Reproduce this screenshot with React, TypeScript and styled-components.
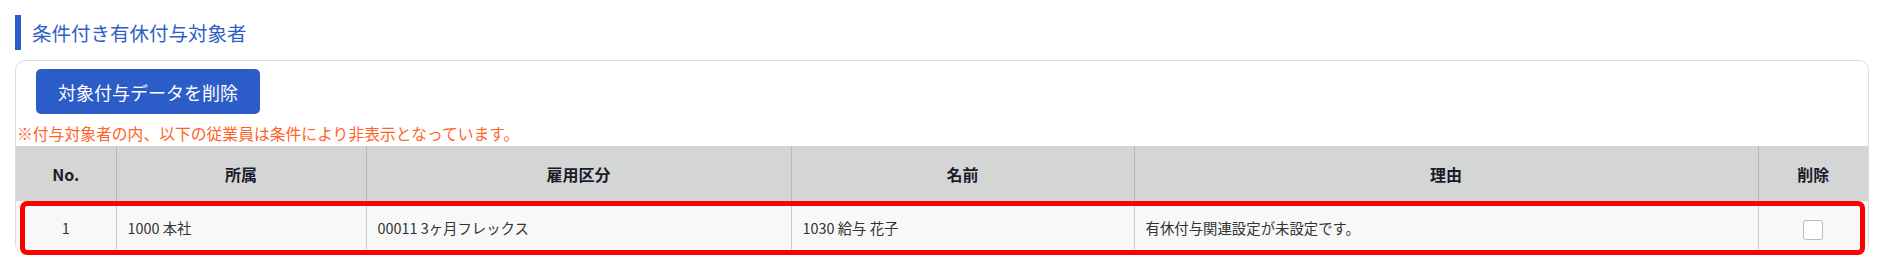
import React from 'react';
import styled, {createGlobalStyle} from "styled-components";

const GlobalStyle = createGlobalStyle`
    body {
        margin: 0;
        background: #ffffff;
        font-family: "Noto Sans CJK JP", "Noto Sans", sans-serif;
        color: #333;
    }
`

const columns = [
    {title: 'No.', width: 100},
    {title: '所属', width: 250},
    {title: '雇用区分', width: 425},
    {title: '名前', width: 343},
    {title: '理由', width: 624},
    {title: '削除', width: 110},
]

const rows = [
    {no: '1', dept: '1000 本社', type: '00011 3ヶ月フレックス', name: '1030 給与 花子', reason: '有休付与関連設定が未設定です。'},
]

export default function App() {
    return (
        <Page>
            <GlobalStyle/>
            <Heading>条件付き有休付与対象者</Heading>
            <Card>
                <DeleteButton>対象付与データを削除</DeleteButton>
                <Notice>※付与対象者の内、以下の従業員は条件により非表示となっています。</Notice>
                <Table>
                    <thead>
                    <tr>
                        {columns.map(c => <Th key={c.title} $width={c.width}>{c.title}</Th>)}
                    </tr>
                    </thead>
                    <tbody>
                    {rows.map(r => (
                        <Row key={r.no}>
                            <Td $center>{r.no}</Td>
                            <Td>{r.dept}</Td>
                            <Td>{r.type}</Td>
                            <Td>{r.name}</Td>
                            <Td>{r.reason}</Td>
                            <Td $center>
                                <CheckBox type="checkbox"/>
                            </Td>
                        </Row>
                    ))}
                    </tbody>
                </Table>
                <Highlight/>
            </Card>
        </Page>
    );
}

const Page = styled.div`
    padding: 15px 13px 20px 15px;
`

const Heading = styled.h2`
    margin: 0;
    height: 35px;
    display: flex;
    align-items: center;
    border-left: 6px solid #2a5bcf;
    padding-left: 11px;
    font-size: 19.5px;
    font-weight: normal;
    color: #2f5fc4;
    line-height: 35px;
`

const Card = styled.div`
    position: relative;
    margin-top: 10px;
    border: 1px solid #dcdcdc;
    border-radius: 10px;
    padding-top: 8px;
`

const DeleteButton = styled.button`
    display: block;
    margin-left: 20px;
    width: 224px;
    height: 45px;
    border: none;
    border-radius: 5px;
    background: #2b5cc8;
    color: #fff;
    font-family: inherit;
    font-size: 18px;
    cursor: pointer;
`

const Notice = styled.p`
    margin: 8px 0 0 1px;
    font-size: 15.8px;
    line-height: 24px;
    color: #ff6428;
`

const Table = styled.table`
    width: 100%;
    border-collapse: collapse;
    table-layout: fixed;
    font-size: 14.4px;
`

const Th = styled.th<{ $width: number }>`
    box-sizing: border-box;
    width: ${p => p.$width}px;
    height: 55px;
    padding: 0;
    background: #d4d6d5;
    color: #1b1b2b;
    font-size: 16px;
    font-weight: bold;
    text-align: center;
    border-left: 1px solid #b8b8b8;

    &:first-child {
        border-left: none;
    }
`

const Row = styled.tr`
    background: #f8f8f8;
`

const Td = styled.td<{ $center?: boolean }>`
    box-sizing: border-box;
    height: 52px;
    padding: 0 11px;
    text-align: ${p => (p.$center ? 'center' : 'left')};
    border-left: 1px solid #cccccc;
    color: #333;
    vertical-align: middle;

    &:first-child {
        border-left: none;
    }
`

const CheckBox = styled.input`
    appearance: none;
    margin: 4px 0 0;
    width: 20px;
    height: 20px;
    border: 1px solid #bbbbbb;
    border-radius: 3px;
    background: #fff;
    vertical-align: middle;
`

const Highlight = styled.div`
    position: absolute;
    left: 4px;
    right: 3px;
    bottom: -2px;
    height: 54px;
    border: 5px solid #ff0000;
    border-radius: 7px;
    box-sizing: border-box;
    pointer-events: none;
`
